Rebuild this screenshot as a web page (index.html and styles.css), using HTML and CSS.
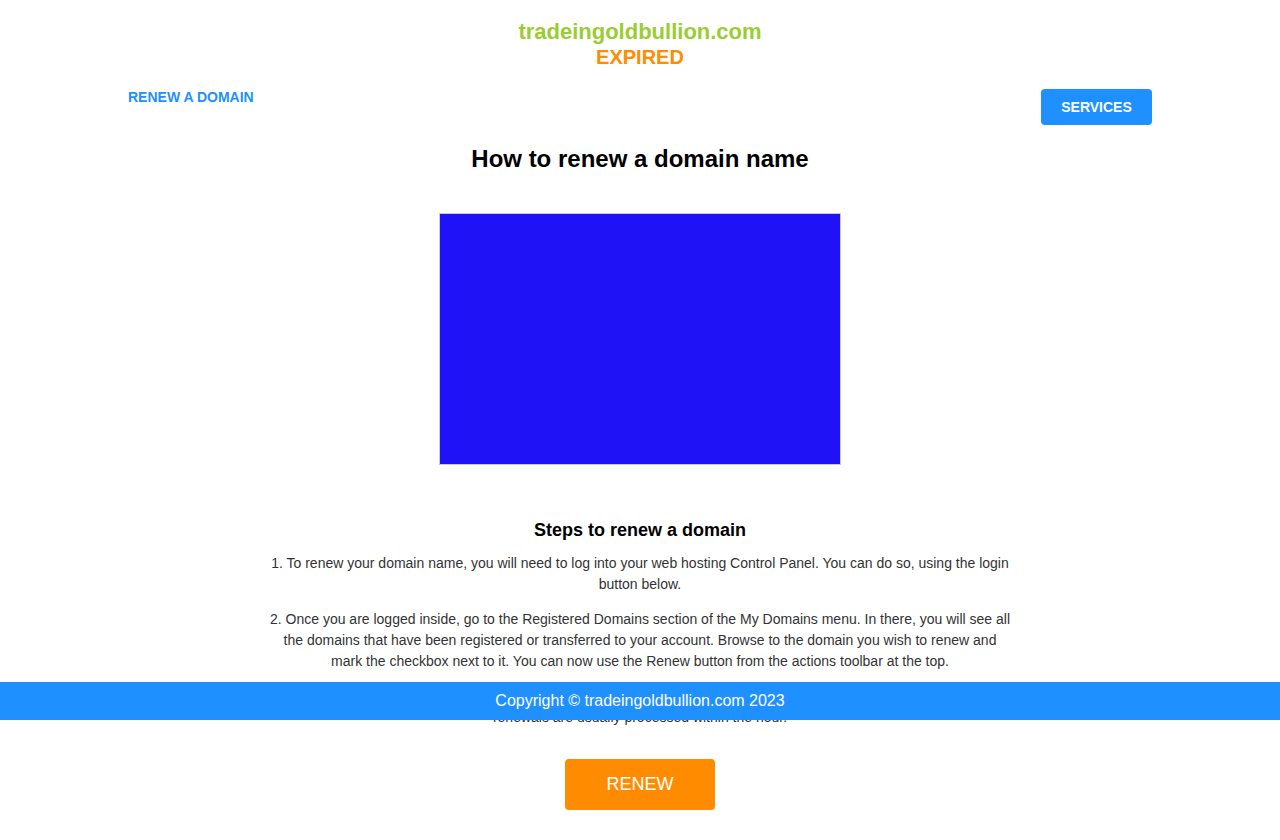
FILE: index.html
```html
<!DOCTYPE html>
<html lang="en">
<head>
<meta charset="utf-8">
<title>tradeingoldbullion.com expired</title>
<link rel="stylesheet" href="styles.css">
</head>
<body>
<header class="brand">
  <div class="brand-name">tradeingoldbullion.com</div>
  <div class="brand-status">EXPIRED</div>
</header>
<nav class="topnav">
  <a class="nav-link" href="#">RENEW A DOMAIN</a>
  <a class="nav-button" href="#">SERVICES</a>
</nav>
<main class="content">
  <h2 class="page-title">How to renew a domain name</h2>
  <div class="picture"></div>
  <section class="steps">
    <h3 class="steps-title">Steps to renew a domain</h3>
    <p>1. To renew your domain name, you will need to log into your web hosting Control Panel. You can do so, using the login button below.</p>
    <p>2. Once you are logged inside, go to the Registered Domains section of the My Domains menu. In there, you will see all the domains that have been registered or transferred to your account. Browse to the domain you wish to renew and mark the checkbox next to it. You can now use the Renew button from the actions toolbar at the top.</p>
    <p>3. After you confirm the renewal, choose the desired period and complete the payment using your balance. Domain renewals are usually processed within the hour.</p>
  </section>
  <a class="renew-button" href="#">RENEW</a>
</main>
<footer class="footer">Copyright © tradeingoldbullion.com 2023</footer>
</body>
</html>
```
FILE: styles.css
```css
html, body {
  margin: 0;
  padding: 0;
  background: #ffffff;
}
body {
  font-family: "Liberation Sans", Arial, sans-serif;
  color: #000;
}
.brand {
  padding-top: 20px;
  text-align: center;
  font-weight: bold;
}
.brand-name {
  color: #9acd32;
  font-size: 22px;
  line-height: 24px;
}
.brand-status {
  color: #ff8c00;
  font-size: 20px;
  line-height: 26px;
}

.topnav {
  display: flex;
  justify-content: space-between;
  align-items: flex-start;
  padding: 0 128px;
  margin-top: 19px;
}
.nav-link {
  color: #1e90ff;
  font-weight: bold;
  font-size: 14px;
  line-height: 16px;
  text-decoration: none;
}
.nav-button {
  display: block;
  background: #1e90ff;
  color: #fff;
  font-weight: bold;
  font-size: 14px;
  line-height: 36px;
  height: 36px;
  width: 111px;
  text-align: center;
  border-radius: 4px;
  text-decoration: none;
}

.content {
  display: flex;
  flex-direction: column;
  align-items: center;
  padding-bottom: 30px;
}
.page-title {
  margin: 20px 0 0;
  font-size: 24px;
  line-height: 28px;
  font-weight: bold;
}
.picture {
  margin-top: 40px;
  width: 400px;
  height: 250px;
  background: #1f12f7;
  border: 1px solid #cccccc;
}
.steps {
  margin-top: 54px;
  width: 745px;
  text-align: center;
}
.steps-title {
  margin: 0 0 12px;
  font-size: 18px;
  line-height: 22px;
  font-weight: bold;
}
.steps p {
  margin: 0 0 14px;
  font-size: 14px;
  line-height: 21px;
  color: #333333;
}
.steps p:last-child { margin-bottom: 0; }

.renew-button {
  margin-top: 31px;
  display: block;
  width: 150px;
  height: 51px;
  line-height: 51px;
  text-align: center;
  background: #ff8c00;
  color: #fff;
  font-size: 18px;
  border-radius: 4px;
  text-decoration: none;
}

.footer {
  position: fixed;
  left: 0;
  right: 0;
  bottom: 120px;
  height: 38px;
  line-height: 38px;
  background: #1e90ff;
  color: #fff;
  text-align: center;
  font-size: 16px;
}
```
